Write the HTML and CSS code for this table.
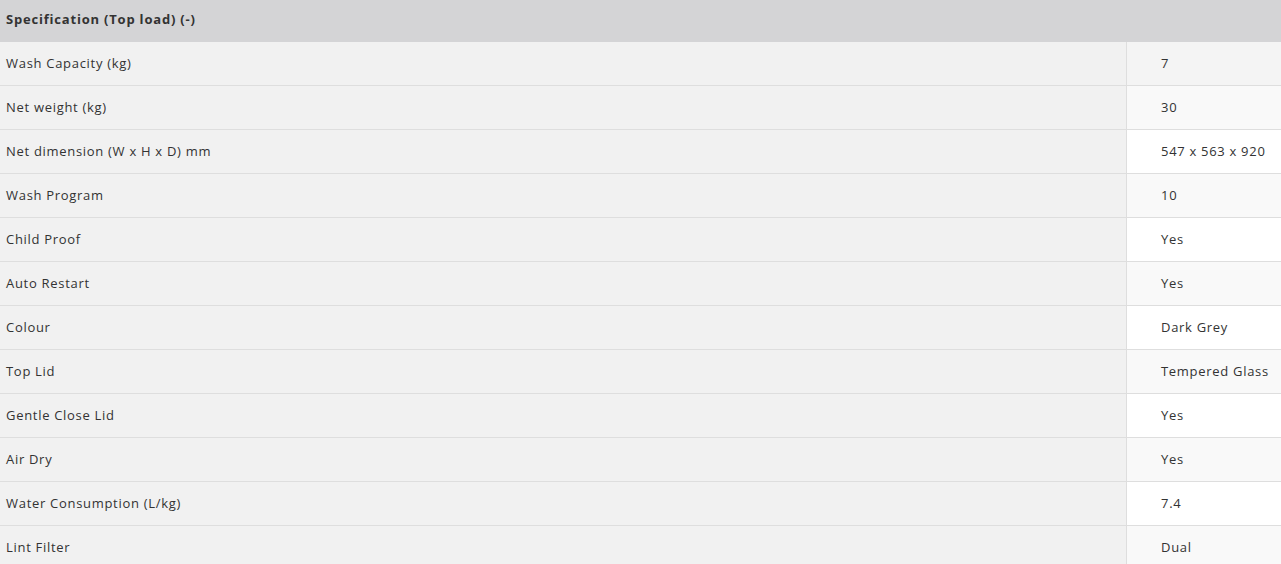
FILE: index.html
```html
<!DOCTYPE html>
<html>
<head>
<meta charset="utf-8">
<link rel="stylesheet" href="styles.css">
</head>
<body>
<div class="spec">
  <div class="spec-head">Specification (Top load) (-)</div>
  <div class="row hover"><div class="k">Wash Capacity (kg)</div><div class="v">7</div></div>
  <div class="row odd"><div class="k">Net weight (kg)</div><div class="v">30</div></div>
  <div class="row"><div class="k">Net dimension (W x H x D) mm</div><div class="v">547 x 563 x 920</div></div>
  <div class="row odd"><div class="k">Wash Program</div><div class="v">10</div></div>
  <div class="row"><div class="k">Child Proof</div><div class="v">Yes</div></div>
  <div class="row odd"><div class="k">Auto Restart</div><div class="v">Yes</div></div>
  <div class="row"><div class="k">Colour</div><div class="v">Dark Grey</div></div>
  <div class="row odd"><div class="k">Top Lid</div><div class="v">Tempered Glass</div></div>
  <div class="row"><div class="k">Gentle Close Lid</div><div class="v">Yes</div></div>
  <div class="row odd"><div class="k">Air Dry</div><div class="v">Yes</div></div>
  <div class="row"><div class="k">Water Consumption (L/kg)</div><div class="v">7.4</div></div>
  <div class="row odd"><div class="k">Lint Filter</div><div class="v">Dual</div></div>
</div>
</body>
</html>
```
FILE: styles.css
```css
html, body {
  margin: 0;
  padding: 0;
  background: #ffffff;
}
body {
  font-family: "Open Sans", "Noto Sans", sans-serif;
  color: #333333;
  overflow: hidden;
}
.spec {
  width: 1281px;
}
.spec-head {
  height: 42px;
  box-sizing: border-box;
  padding-bottom: 4px;
  background: #d4d4d6;
  display: flex;
  align-items: center;
  padding-left: 6px;
  font-size: 13px;
  font-weight: 700;
  letter-spacing: 0.8px;
  color: #333333;
}
.row {
  display: grid;
  grid-template-columns: 1126px 1fr;
  height: 43px;
  border-bottom: 1px solid #dedede;
  font-size: 13px;
  letter-spacing: 0.7px;
}
.k {
  background: #f1f1f1;
  display: flex;
  align-items: center;
  padding-left: 6px;
  padding-bottom: 2px;
}
.v {
  background: #ffffff;
  border-left: 1px solid #dedede;
  display: flex;
  align-items: center;
  padding-left: 34px;
  padding-bottom: 2px;
  white-space: nowrap;
}
.row.odd .v {
  background: #f9f9f9;
}
.row.hover .v {
  background: #f4f4f4;
}
```
